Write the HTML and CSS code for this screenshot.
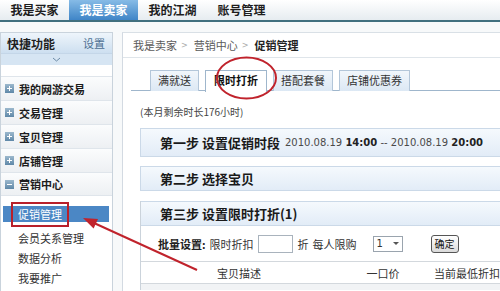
FILE: index.html
```html
<!DOCTYPE html>
<html lang="zh-CN">
<head>
  <meta charset="UTF-8">
  <meta name="viewport" content="width=device-width, initial-scale=1.0">
  <title>促销管理</title>
  <link rel="stylesheet" href="styles.css">
</head>
<body>
  <div class="topnav">
    <div class="nav-item">我是买家</div>
    <div class="nav-item active">我是卖家</div>
    <div class="nav-item">我的江湖</div>
    <div class="nav-item">账号管理</div>
  </div>

  <div class="layout">
    <div class="sidebar">
      <div class="side-head">
        <span class="side-title">快捷功能</span>
        <span class="side-set">设置</span>
      </div>
      <div class="side-toggle">
        <svg width="9" height="5" viewBox="0 0 9 5"><path d="M1 1 L4.5 4 L8 1" fill="none" stroke="#6c8aa6" stroke-width="1"/></svg>
      </div>
      <ul class="menu">
        <li class="menu-row"><i class="ico plus"></i>我的网游交易</li>
        <li class="menu-row"><i class="ico plus"></i>交易管理</li>
        <li class="menu-row"><i class="ico plus"></i>宝贝管理</li>
        <li class="menu-row"><i class="ico plus"></i>店铺管理</li>
        <li class="menu-row"><i class="ico minus"></i>营销中心</li>
      </ul>
      <ul class="sub-menu">
        <li class="sub-item active">促销管理</li>
        <li class="sub-item">会员关系管理</li>
        <li class="sub-item">数据分析</li>
        <li class="sub-item">我要推广</li>
      </ul>
    </div>

    <div class="content">
      <div class="crumbs">
        <span>我是卖家</span><span class="sep">&gt;</span>
        <span>营销中心</span><span class="sep">&gt;</span>
        <b>促销管理</b>
      </div>

      <div class="tabs">
        <div class="tab">满就送</div>
        <div class="tab active">限时打折</div>
        <div class="tab">搭配套餐</div>
        <div class="tab">店铺优惠券</div>
      </div>

      <div class="body">
        <p class="remain">(本月剩余时长176小时)</p>

        <div class="step step-tall">
          <b class="step-title">第一步 设置促销时段</b>
          <span class="date">2010.08.19 <b>14:00</b> -- 2010.08.19 <b>20:00</b></span>
        </div>

        <div class="step">
          <b class="step-title">第二步 选择宝贝</b>
        </div>

        <div class="step-box">
          <div class="step">
            <b class="step-title">第三步 设置限时打折(1)</b>
          </div>
          <div class="batch">
            <b>批量设置:</b>
            <span>限时折扣</span>
            <span class="input"></span>
            <span>折</span>
            <span>每人限购</span>
            <span class="select">1<i class="caret"></i></span>
            <span class="btn">确定</span>
          </div>
          <div class="thead">
            <span class="col-desc">宝贝描述</span>
            <span class="col-price">一口价</span>
            <span class="col-disc">当前最低折扣</span>
          </div>
          <div class="trow"></div>
        </div>
      </div>
    </div>
  </div>

  <svg class="marks" width="500" height="291" viewBox="0 0 500 291">
    <ellipse cx="246.5" cy="78" rx="29.5" ry="20.5" fill="none" stroke="#c0232c" stroke-width="2"/>
    <rect x="12" y="203" width="56" height="23" fill="none" stroke="#b8202a" stroke-width="2"/>
    <line x1="197" y1="270" x2="94" y2="223" stroke="#c0232c" stroke-width="2"/>
    <polygon points="83,218 93.6,228.6 98,219" fill="#c0232c"/>
  </svg>
</body>
</html>
```

FILE: styles.css
```css
* {
  box-sizing: border-box;
}

body {
  margin: 0;
  width: 500px;
  height: 291px;
  overflow: hidden;
  position: relative;
  background: #f7f9fa;
  color: #222;
  font-family: "Noto Sans CJK SC", "DejaVu Sans", sans-serif;
  font-size: 11px;
}

ul {
  list-style: none;
  margin: 0;
  padding: 0;
}

p {
  margin: 0;
}

/* top navigation */
.topnav {
  display: flex;
  height: 22px;
  background: linear-gradient(#ffffff, #e6ecf0);
  border-bottom: 2px solid #41707f;
}

.nav-item {
  width: 69px;
  line-height: 20px;
  text-align: center;
  font-size: 12px;
  font-weight: bold;
  color: #1d1d1d;
}

.nav-item.active {
  background: linear-gradient(#86bbe6, #3f85c7);
  color: #fff;
}

.layout {
  display: flex;
  align-items: flex-start;
  padding-top: 10px;
}

/* left quick menu */
.sidebar {
  width: 126px;
  height: 259px;
  background: #fff;
  border: 1px solid #c9d3dc;
  border-bottom: none;
}

.side-head {
  height: 20px;
  display: flex;
  justify-content: space-between;
  align-items: center;
  padding: 0 7px 0 6px;
  background: linear-gradient(#eef5fb, #cddff0);
}

.side-title {
  font-size: 12px;
  font-weight: bold;
  color: #1e1e1e;
}

.side-set {
  color: #4d6f92;
}

.side-toggle {
  height: 12px;
  display: flex;
  justify-content: center;
  align-items: center;
  background: #d6e5f3;
  border-top: 1px solid #c4d6e8;
}

.menu {
  margin-top: 11px;
}

.menu-row {
  height: 24px;
  display: flex;
  align-items: center;
  gap: 5px;
  padding-left: 4px;
  border-top: 1px solid #dfe5eb;
  background: linear-gradient(#fbfcfd, #edf0f3);
  font-size: 11px;
  font-weight: bold;
  color: #1c1c1c;
}

.menu-row:last-child {
  border-bottom: 1px solid #dfe5eb;
}

.ico {
  width: 9px;
  height: 9px;
  position: relative;
  background: linear-gradient(#9cb8cd, #5f88a8);
}

.ico::before,
.ico.plus::after {
  content: '';
  position: absolute;
  background: #fff;
  left: 2px;
  top: 4px;
  width: 5px;
  height: 1px;
}

.ico.plus::after {
  left: 4px;
  top: 2px;
  width: 1px;
  height: 5px;
}

.sub-menu {
  padding-top: 10px;
}

.sub-item {
  height: 20px;
  line-height: 20px;
  padding-left: 17px;
  color: #333;
}

.sub-item.active {
  height: 16px;
  line-height: 16px;
  margin: 0 3px 6px 2px;
  padding-left: 15px;
  background: #4b87c5;
  color: #fff;
}

/* right content */
.content {
  flex: 1;
  height: 259px;
  margin-left: 9px;
  background: #fff;
  border-left: 1px solid #d3dae2;
  border-top: 1px solid #d9e0e6;
}

.crumbs {
  height: 25px;
  display: flex;
  align-items: center;
  padding-left: 10px;
  border-bottom: 1px solid #dfe5ea;
  color: #5a5a5a;
  font-size: 11px;
}

.crumbs .sep {
  margin: 0 6px 0 4px;
  color: #aaa;
  font-family: "DejaVu Sans", sans-serif;
  font-size: 8px;
}

.crumbs b {
  font-size: 11px;
  color: #222;
}

.tabs {
  display: flex;
  gap: 6px;
  height: 21px;
  margin: 12px 0 0 8px;
  padding-left: 19px;
  border-bottom: 1px solid #9fb6cc;
}

.tab {
  height: 21px;
  line-height: 19px;
  padding: 0 7px;
  border: 1px solid #b3c6d9;
  border-bottom: none;
  background: linear-gradient(#f1f6fb, #dce8f4);
  color: #333;
}

.tab.active {
  padding: 0 8px;
  height: 22px;
  background: #fff;
  border-color: #9fb6cc;
  font-weight: bold;
  color: #111;
}

.body {
  padding-left: 17px;
}

.remain {
  margin-top: 14px;
  font-size: 10px;
  color: #444;
  line-height: 14px;
}

.step {
  height: 25px;
  display: flex;
  align-items: center;
  gap: 5px;
  padding-left: 19px;
  border: 1px solid #cbd9e8;
  border-right: none;
  background: linear-gradient(#f5f9fd, #e2ecf7);
  margin-top: 9px;
}

.step-tall {
  height: 29px;
}

.step-title {
  font-size: 13px;
  color: #1a1a1a;
}

.date {
  font-family: "DejaVu Sans", sans-serif;
  font-size: 10px;
  color: #4a4a4a;
}

.date b {
  color: #222;
}

.step-box {
  margin-top: 10px;
  border-left: 1px solid #cbd3db;
  background: #fff;
}

.step-box .step {
  margin-top: 0;
  border-left: none;
}

.batch {
  height: 35px;
  display: flex;
  align-items: center;
  gap: 4px;
  padding-left: 17px;
  color: #333;
}

.batch b {
  color: #222;
}

.input {
  width: 35px;
  height: 18px;
  border: 1px solid #a9b3bd;
  background: #fff;
  margin-right: 1px;
}

.select {
  display: flex;
  align-items: center;
  justify-content: space-between;
  width: 30px;
  height: 16px;
  margin-left: 12px;
  padding: 0 3px;
  border: 1px solid #9aa4ae;
  font-family: "DejaVu Sans", sans-serif;
  font-size: 10px;
}

.caret {
  border: 3px solid transparent;
  border-top-color: #555;
  margin-top: 3px;
}

.btn {
  margin-left: 24px;
  height: 18px;
  line-height: 16px;
  padding: 0 3px;
  border: 1px solid #555;
  border-radius: 3px;
  background: linear-gradient(#ffffff, #dadada);
  font-size: 10px;
  color: #111;
}

.thead {
  display: grid;
  grid-template-columns: 196px 92px 1fr;
  height: 23px;
  align-items: center;
  border-top: 1px solid #d3d8dd;
  border-bottom: 1px solid #d3d8dd;
  color: #333;
}

.col-desc,
.col-price {
  text-align: center;
}

.col-disc {
  padding-left: 5px;
  white-space: nowrap;
}

.trow {
  height: 6px;
  background: #f1f3f5;
}

/* red annotation marks */
.marks {
  position: absolute;
  left: 0;
  top: 0;
  pointer-events: none;
}
```
